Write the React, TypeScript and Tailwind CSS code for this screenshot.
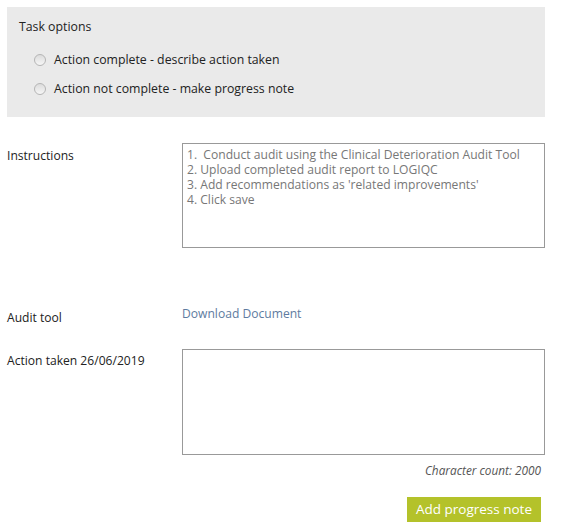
import React from "react";

const font = { fontFamily: '"Open Sans", "Liberation Sans", Arial, sans-serif' };

function Radio({ label }: { label: string }) {
  return (
    <label className="flex items-center gap-[8px] text-[12.3px] leading-[18px] text-[#222]">
      <span className="w-[12px] h-[12px] rounded-full border border-[#b5b5b5] bg-gradient-to-b from-[#dcdcdc] to-[#f6f6f6] shrink-0" />
      {label}
    </label>
  );
}

export default function App() {
  return (
    <div className="w-[563px] h-[531px] bg-white pt-[7px] pl-[7px] pr-[18px]" style={font}>
      {/* Task options */}
      <div className="bg-[#eaeaea] h-[110px] pl-[12px] pt-[11px]">
        <p className="text-[12.3px] text-[#222] leading-[18px]">Task options</p>
        <div className="mt-[15px] pl-[15px] flex flex-col gap-[11px]">
          <Radio label="Action complete - describe action taken" />
          <Radio label="Action not complete - make progress note" />
        </div>
      </div>

      {/* Instructions */}
      <div className="flex mt-[26px] text-[12.1px] text-[#222]">
        <div className="w-[175px] pt-[4px]">Instructions</div>
        <div className="flex-1 h-[105px] border border-[#999] px-[4px] pt-[3px] text-[#777] leading-[15px]">
          <p>1.&nbsp; Conduct audit using the Clinical Deterioration Audit Tool</p>
          <p>2. Upload completed audit report to LOGIQC</p>
          <p>3. Add recommendations as 'related improvements'</p>
          <p>4. Click save</p>
        </div>
      </div>

      {/* Audit tool */}
      <div className="flex mt-[57px] text-[12.1px] text-[#222]">
        <div className="w-[175px] pt-[4px]">Audit tool</div>
        <a className="text-[#5e7ba0]">Download Document</a>
      </div>

      {/* Action taken */}
      <div className="flex mt-[22px] text-[12.1px] text-[#222]">
        <div className="w-[175px] pt-[3px]">Action taken 26/06/2019</div>
        <textarea className="flex-1 h-[106px] border border-[#999] resize-none outline-none" />
      </div>
      <p className="text-right pr-[4px] mt-[7px] text-[11.8px] italic text-[#555]">Character count: 2000</p>

      <div className="flex justify-end pr-[4px] mt-[17px]">
        <button className="bg-[#b4c22a] text-white text-[13.5px] h-[25px] px-[9px] leading-[25px]">
          Add progress note
        </button>
      </div>
    </div>
  );
}
